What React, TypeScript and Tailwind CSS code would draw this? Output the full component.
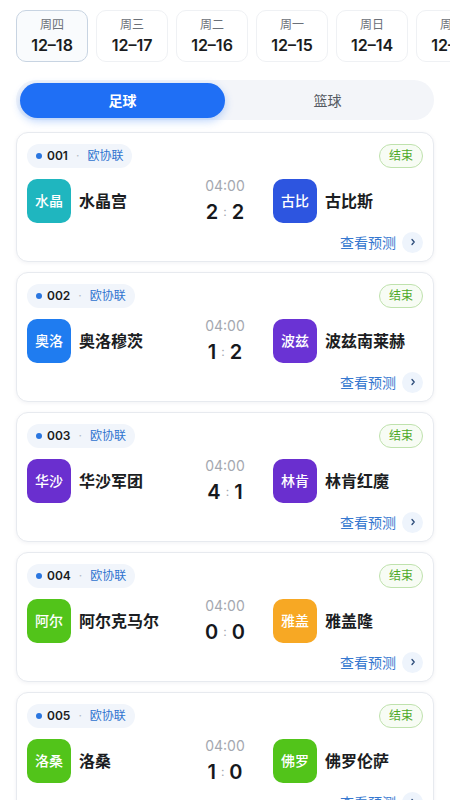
import React from "react";

const days = [
  { d: "周四", date: "12–18", active: true },
  { d: "周三", date: "12–17" },
  { d: "周二", date: "12–16" },
  { d: "周一", date: "12–15" },
  { d: "周日", date: "12–14" },
  { d: "周六", date: "12–13" },
];

type Match = {
  no: string;
  home: string;
  homeShort: string;
  homeColor: string;
  away: string;
  awayShort: string;
  awayColor: string;
  hs: number;
  as: number;
};

const matches: Match[] = [
  { no: "001", home: "水晶宫", homeShort: "水晶", homeColor: "bg-[#1fb6bf]", away: "古比斯", awayShort: "古比", awayColor: "bg-[#2d55e0]", hs: 2, as: 2 },
  { no: "002", home: "奥洛穆茨", homeShort: "奥洛", homeColor: "bg-[#1f7cf0]", away: "波兹南莱赫", awayShort: "波兹", awayColor: "bg-[#6a33d4]", hs: 1, as: 2 },
  { no: "003", home: "华沙军团", homeShort: "华沙", homeColor: "bg-[#6a2fcf]", away: "林肯红魔", awayShort: "林肯", awayColor: "bg-[#6a2fcf]", hs: 4, as: 1 },
  { no: "004", home: "阿尔克马尔", homeShort: "阿尔", homeColor: "bg-[#52c41a]", away: "雅盖隆", awayShort: "雅盖", awayColor: "bg-[#f7a824]", hs: 0, as: 0 },
  { no: "005", home: "洛桑", homeShort: "洛桑", homeColor: "bg-[#52c41a]", away: "佛罗伦萨", awayShort: "佛罗", awayColor: "bg-[#52c41a]", hs: 1, as: 0 },
];

function Team({ name, short, color }: { name: string; short: string; color: string }) {
  return (
    <div className="flex items-center gap-2 min-w-0">
      <div className={`w-[44px] h-[44px] shrink-0 rounded-[10px] ${color} flex items-center justify-center text-white text-[14px] font-medium`}>
        {short}
      </div>
      <div className="text-[16px] font-semibold text-[#1b1d22] whitespace-nowrap">{name}</div>
    </div>
  );
}

function Card({ m }: { m: Match }) {
  return (
    <div className="rounded-[12px] border border-[#e7eaef] bg-white shadow-[0_1px_4px_rgba(20,40,80,0.06)] px-[10px] pt-[11px] pb-[10px] h-[130px] shrink-0">
      <div className="flex items-center justify-between h-[24px]">
        <div className="flex items-center h-[24px] rounded-full bg-[#f1f5fb] pl-[9px] pr-[9px]">
          <span className="w-[6px] h-[6px] rounded-full bg-[#2a76e0]" />
          <span className="ml-[5px] text-[12px] font-semibold text-[#1b1d22]">{m.no}</span>
          <span className="mx-[8px] text-[12px] text-[#b6bcc6]">·</span>
          <span className="text-[12px] text-[#2f73cf]">欧协联</span>
        </div>
        <div className="h-[24px] px-[9px] rounded-full border border-[#bfe2ad] bg-[#f7fcf4] text-[12px] text-[#4fa92a] flex items-center">
          结束
        </div>
      </div>
      <div className="mt-[10px] grid grid-cols-[1fr_96px_1fr] items-center h-[44px]">
        <Team name={m.home} short={m.homeShort} color={m.homeColor} />
        <div className="flex flex-col items-center">
          <div className="text-[14px] leading-[16px] text-[#a4a8b0]">04:00</div>
          <div className="mt-[7px] flex items-center leading-[22px]">
            <span className="text-[20px] font-semibold text-[#16181d]">{m.hs}</span>
            <span className="mx-[5px] text-[12px] text-[#a4a8b0]">:</span>
            <span className="text-[20px] font-semibold text-[#16181d]">{m.as}</span>
          </div>
        </div>
        <Team name={m.away} short={m.awayShort} color={m.awayColor} />
      </div>
      <div className="mt-[9px] flex items-center justify-end h-[22px]">
        <span className="text-[14px] text-[#3577cf]">查看预测</span>
        <span className="ml-[6px] w-[21px] h-[21px] rounded-full bg-[#eef4fc] flex items-center justify-center">
          <svg width="8" height="8" viewBox="0 0 8 8" fill="none">
            <path d="M3 1.5 L5.2 4 L3 6.5" stroke="#2b4a78" strokeWidth="1.3" strokeLinecap="round" strokeLinejoin="round" />
          </svg>
        </span>
      </div>
    </div>
  );
}

export default function App() {
  return (
    <div
      className="w-[450px] h-[800px] overflow-hidden bg-white"
      style={{ fontFamily: 'Inter, "Noto Sans CJK SC", sans-serif' }}
    >
      <div className="flex gap-[8px] pl-[16px] pt-[10px] overflow-hidden">
        {days.map((d) => (
          <div
            key={d.date}
            className={`w-[72px] h-[52px] shrink-0 rounded-[10px] border flex flex-col items-center justify-center ${
              d.active ? "border-[#c8d4e2] bg-[#f9fbfd]" : "border-[#eff1f4] bg-white"
            }`}
          >
            <div className="text-[12px] leading-[14px] text-[#6b7078]">{d.d}</div>
            <div className="mt-[3px] text-[16px] leading-[20px] font-semibold text-[#1a1c20]">{d.date}</div>
          </div>
        ))}
      </div>
      <div className="mx-[16px] mt-[18px] h-[40px] rounded-full bg-[#f3f5f9] flex items-center px-[4px]">
        <div className="w-[205px] h-[35px] rounded-full bg-[#1f6ff5] shadow-[0_3px_8px_rgba(31,111,245,0.3)] flex items-center justify-center text-white text-[14px] font-semibold">
          足球
        </div>
        <div className="flex-1 flex items-center justify-center text-[14px] text-[#555a62]">篮球</div>
      </div>
      <div className="mx-[16px] mt-[12px] flex flex-col gap-[10px]">
        {matches.map((m) => (
          <Card key={m.no} m={m} />
        ))}
      </div>
    </div>
  );
}
